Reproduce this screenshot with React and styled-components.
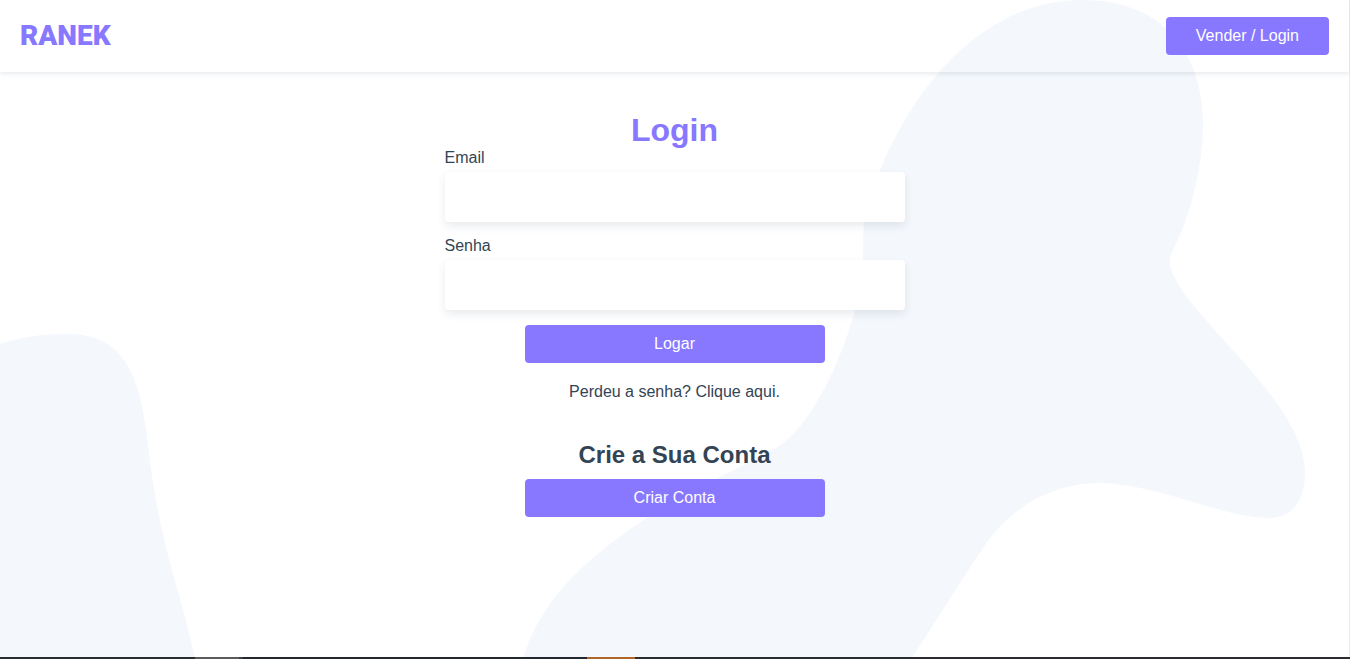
import React from "react";
import styled, { createGlobalStyle } from "styled-components";

const GlobalStyle = createGlobalStyle`
  *, *::before, *::after { box-sizing: border-box; }
  body {
    margin: 0;
    background: #fff;
    color: #345;
    font: 16px/18px "Liberation Sans", Arial, sans-serif;
  }
  h1, h2, p { margin: 0; }
  a { color: inherit; text-decoration: none; }
`;

const Page = styled.div`
  position: relative;
  isolation: isolate;
  display: flex;
  flex-direction: column;
  min-height: 100vh;
  border-right: 1px solid #ececec;
`;

const Backdrop = styled.svg`
  position: absolute;
  inset: 0;
  z-index: -1;
  width: 100%;
  height: 100%;
  fill: #f4f7fc;
`;

const Header = styled.header`
  display: flex;
  align-items: center;
  justify-content: space-between;
  padding: 17px 20px;
  box-shadow: 0 2px 4px rgba(30, 60, 90, 0.1);
`;

const Logo = styled.a`
  color: #87f;
  font: 900 28px/38px Roboto, sans-serif;
`;

const ButtonLink = styled.a`
  display: block;
  padding: 10px 30px;
  border-radius: 4px;
  background: #87f;
  color: #fff;
  text-align: center;
`;

const Main = styled.main`
  flex: 1;
  display: flex;
  flex-direction: column;
  align-items: center;
  padding: 40px 20px;
`;

const Title = styled.h1`
  color: #87f;
  font-size: 32px;
  line-height: 36px;
  padding-bottom: 1px;
`;

const Form = styled.form`
  display: flex;
  flex-direction: column;
  align-items: center;
  gap: 15px;
  width: 100%;
  max-width: 460px;
`;

const Field = styled.div`
  display: flex;
  flex-direction: column;
  gap: 5px;
  width: 100%;
`;

const Input = styled.input`
  width: 100%;
  height: 50px;
  padding: 15px;
  border: 0;
  border-radius: 4px;
  background: #fff;
  box-shadow: 0 4px 8px rgba(30, 60, 90, 0.1);
  color: inherit;
  font: inherit;
`;

const SubmitButton = styled.button`
  width: 100%;
  max-width: 300px;
  padding: 10px 30px;
  border: 0;
  border-radius: 4px;
  background: #87f;
  color: #fff;
  font: inherit;
  cursor: pointer;
`;

const Recover = styled.p`
  margin: 20px 0 40px;
`;

const Signup = styled.section`
  display: flex;
  flex-direction: column;
  gap: 10px;
  width: 100%;
  max-width: 300px;
  text-align: center;
`;

const Subtitle = styled.h2`
  font-size: 24px;
  line-height: 28px;
`;

const BottomEdge = styled.div`
  display: flex;
  height: 2px;
  margin-right: -1px;
  background: #2b2c31;
`;

const EdgeSegment = styled.span`
  width: ${({ $width }) => $width}px;
  background: ${({ $color }) => $color};
`;

export default function App() {
  return (
    <>
      <GlobalStyle />
      <Page>
        <Backdrop viewBox="0 0 1349 659" preserveAspectRatio="xMaxYMin slice" aria-hidden="true">
          <path d="M0 344C20 337 43 334 65 334C104 333 124 352 134 379C146 409 147 446 153 482C164 556 182 596 195 659H0Z" />
          <path d="M523 659C537 612 567 578 605 548C668 498 724 477 776 448C808 430 840 366 855 310C869 253 859 232 867 208C892 121 964 0 1083 0C1166 0 1203 57 1203 123C1203 168 1190 217 1173 250C1169 258 1169 260 1171 269C1186 318 1305 400 1305 473C1305 506 1288 518 1268 518C1224 518 1158 484 1100 483C1054 483 1016 504 987 542C959 583 939 617 911 659Z" />
        </Backdrop>
        <Header>
          <Logo href="#">RANEK</Logo>
          <ButtonLink href="#login">Vender / Login</ButtonLink>
        </Header>
        <Main>
          <Title>Login</Title>
          <Form onSubmit={(event) => event.preventDefault()}>
            <Field>
              <label htmlFor="email">Email</label>
              <Input id="email" name="email" type="email" />
            </Field>
            <Field>
              <label htmlFor="senha">Senha</label>
              <Input id="senha" name="senha" type="password" />
            </Field>
            <SubmitButton type="submit">Logar</SubmitButton>
          </Form>
          <Recover>
            <a href="#recuperar">Perdeu a senha? Clique aqui.</a>
          </Recover>
          <Signup>
            <Subtitle>Crie a Sua Conta</Subtitle>
            <ButtonLink href="#criar">Criar Conta</ButtonLink>
          </Signup>
        </Main>
        <BottomEdge aria-hidden="true">
          <EdgeSegment $width={195} $color="#2b2c2e" />
          <EdgeSegment $width={44} $color="#5a5b5c" />
          <EdgeSegment $width={4} $color="#3e4045" />
          <EdgeSegment $width={344} $color="#25272e" />
          <EdgeSegment $width={48} $color="#b0652b" />
        </BottomEdge>
      </Page>
    </>
  );
}
